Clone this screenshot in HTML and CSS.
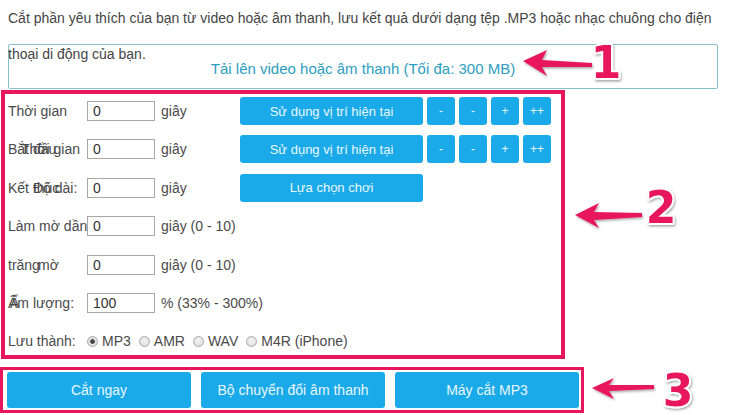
FILE: index.html
```html
<!DOCTYPE html>
<html lang="vi">
<head>
<meta charset="utf-8">
<title>Cắt MP3</title>
<link rel="stylesheet" href="styles.css">
</head>
<body>
<div class="page">
  <p class="intro">Cắt phần yêu thích của bạn từ video hoặc âm thanh, lưu kết quả dưới dạng tệp .MP3 hoặc nhạc chuông cho điện thoại di động của bạn.</p>

  <div class="upload">Tải lên video hoặc âm thanh (Tối đa: 300 MB)</div>

  <div class="panel">
    <div class="row">
      <span class="label">Thời gian</span>
      <input class="field" type="text" value="0">
      <span class="unit">giây</span>
      <button class="btn wide">Sử dụng vị trí hiện tại</button>
      <button class="btn small">-</button>
      <button class="btn small">-</button>
      <button class="btn small">+</button>
      <button class="btn small">++</button>
    </div>
    <div class="row">
      <span class="label">Bắt đầu<span class="over o1">Thời gian</span></span>
      <input class="field" type="text" value="0">
      <span class="unit">giây</span>
      <button class="btn wide">Sử dụng vị trí hiện tại</button>
      <button class="btn small">-</button>
      <button class="btn small">-</button>
      <button class="btn small">+</button>
      <button class="btn small">++</button>
    </div>
    <div class="row">
      <span class="label">Kết thúc<span class="over o2">Độ dài:</span></span>
      <input class="field" type="text" value="0">
      <span class="unit">giây</span>
      <button class="btn wide">Lựa chọn chơi</button>
    </div>
    <div class="row">
      <span class="label">Làm mờ dần</span>
      <input class="field" type="text" value="0">
      <span class="unit">giây (0 - 10)</span>
    </div>
    <div class="row">
      <span class="label">trăng<span class="over o3">mờ</span></span>
      <input class="field" type="text" value="0">
      <span class="unit">giây (0 - 10)</span>
    </div>
    <div class="row">
      <span class="label">Âm lượng:<span class="over o4">Ẩ</span></span>
      <input class="field" type="text" value="100">
      <span class="unit">% (33% - 300%)</span>
    </div>
    <div class="row">
      <span class="label">Lưu thành:</span>
      <label class="opt"><input class="radio" type="radio" name="fmt" checked>MP3</label>
      <label class="opt"><input class="radio" type="radio" name="fmt">AMR</label>
      <label class="opt"><input class="radio" type="radio" name="fmt">WAV</label>
      <label class="opt"><input class="radio" type="radio" name="fmt">M4R (iPhone)</label>
    </div>
  </div>

  <div class="actions">
    <button class="btn big">Cắt ngay</button>
    <button class="btn big">Bộ chuyển đổi âm thanh</button>
    <button class="btn big">Máy cắt MP3</button>
  </div>

  <svg class="notes" width="730" height="415" viewBox="0 0 730 415" aria-hidden="true">
    <defs>
      <filter id="sh" x="-30%" y="-30%" width="160%" height="160%">
        <feDropShadow dx="1" dy="1.5" stdDeviation="1.2" flood-color="#000" flood-opacity="0.35"/>
      </filter>
    </defs>
    <g class="arrow" filter="url(#sh)">
      <polygon points="523,61 547,50 542,60 592,63 592,67 542,67 547,76"/>
      <polygon points="575,215 599,203 594,212 642,213 642,217 594,220 599,228"/>
      <polygon points="592,388 614,378 609,385 654,385 654,389 609,391 614,399"/>
    </g>
    <g class="digit" filter="url(#sh)">
      <text x="606" y="78">1</text>
      <text x="661" y="223">2</text>
      <text x="678" y="406">3</text>
    </g>
  </svg>
</div>
</body>
</html>
```
FILE: styles.css
```css
* { box-sizing: border-box; }

html, body {
  margin: 0;
  padding: 0;
  background: #fff;
}

.page {
  position: relative;
  width: 730px;
  height: 415px;
  overflow: hidden;
  font-family: "Liberation Sans", Arial, sans-serif;
  color: #4a4a4a;
}

.intro {
  margin: 0;
  padding: 0 0 0 8px;
  width: 720px;
  font-size: 14px;
  line-height: 36px;
  color: #444;
}

.upload {
  margin: -28px 0 0 8px;
  width: 710px;
  height: 45px;
  border: 1px solid #86c2cc;
  border-radius: 2px;
  display: flex;
  align-items: center;
  justify-content: center;
  padding-top: 3px;
  font-size: 15px;
  color: #2d9dc0;
}

.panel {
  margin: 1px 0 0 1px;
  width: 564px;
  border: 4px solid #e8175d;
  padding: 3px 0 0 3px;
  display: flex;
  flex-direction: column;
  gap: 10.4px;
}

.row {
  display: flex;
  align-items: center;
  height: 28px;
  font-size: 14px;
}

.label {
  position: relative;
  width: 79px;
  flex: none;
  white-space: nowrap;
}

.over {
  position: absolute;
  top: 0;
}
.o1 { left: 13px; }
.o2 { left: 25px; }
.o3 { left: 30px; }
.o4 { left: 2px; }

.field {
  width: 68px;
  height: 20px;
  flex: none;
  border: 1px solid #a8a8a8;
  padding: 0 0 0 5px;
  font: 14px "Liberation Sans", Arial, sans-serif;
  color: #333;
  background: #fff;
  outline: none;
}

.unit {
  width: 85px;
  flex: none;
  padding-left: 6px;
  white-space: nowrap;
}

.btn {
  border: 0;
  margin: 0;
  background: #1aa9e9;
  color: #e9f7fd;
  border-radius: 3px;
  font-family: "Liberation Sans", Arial, sans-serif;
  padding: 0;
  cursor: pointer;
}

.wide {
  width: 183px;
  height: 28px;
  font-size: 13px;
  flex: none;
}

.small {
  width: 28px;
  height: 28px;
  margin-left: 4px;
  font-size: 12px;
  flex: none;
}

.opt {
  display: flex;
  align-items: center;
  gap: 4px;
  margin-right: 8px;
}

.radio {
  appearance: none;
  -webkit-appearance: none;
  width: 11px;
  height: 11px;
  margin: 0;
  border: 1px solid #a9a9a9;
  border-radius: 50%;
  background: radial-gradient(circle at 50% 40%, #f4f4f4 0, #d9d9d9 100%);
}
.radio:checked {
  background: radial-gradient(circle, #444 0, #444 2px, #e6e6e6 2.6px, #d4d4d4 100%);
}

.actions {
  margin: 8px 0 0 0;
  width: 584px;
  border: 3px solid #e8175d;
  padding: 2px 2px 2px 4px;
  display: flex;
  gap: 10px;
}

.big {
  width: 184px;
  height: 36px;
  font-size: 14px;
  flex: none;
}

.notes {
  position: absolute;
  left: 0;
  top: 0;
  pointer-events: none;
}

.arrow polygon {
  fill: #e8175d;
}

.digit text {
  font-family: "DejaVu Sans", "Liberation Sans", sans-serif;
  font-weight: bold;
  font-size: 44px;
  text-anchor: middle;
  fill: #e8175d;
  stroke: #fff;
  stroke-width: 4px;
  paint-order: stroke;
  stroke-linejoin: round;
}
```
